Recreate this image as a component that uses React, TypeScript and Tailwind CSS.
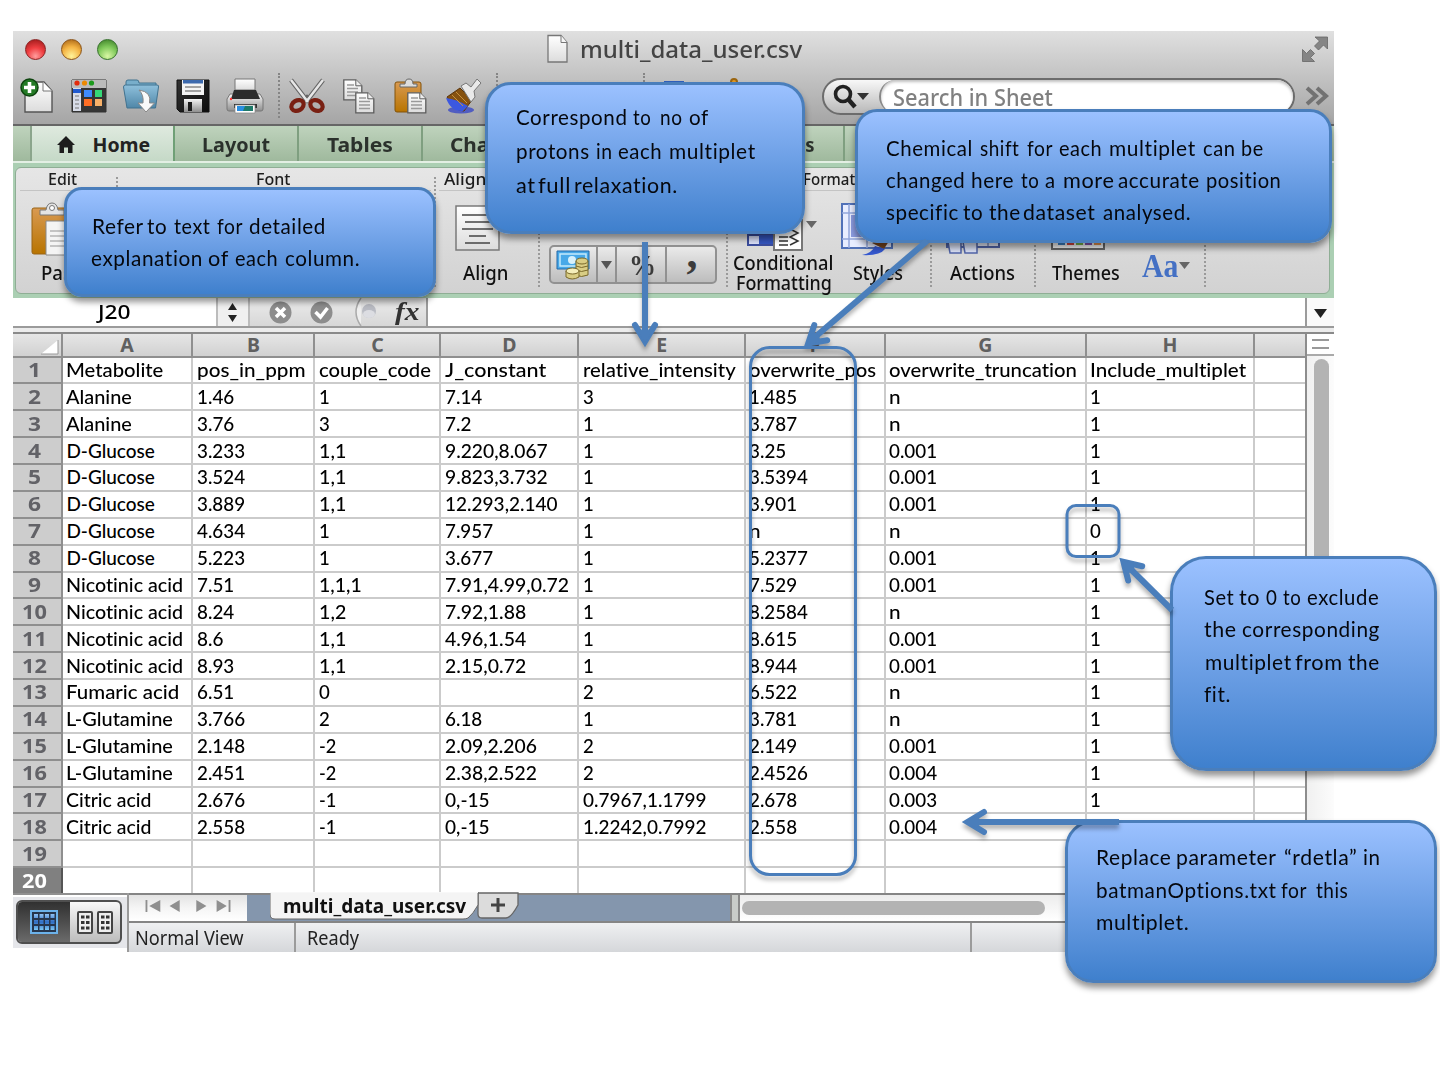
import { useLayoutEffect, useRef, useState, type ReactNode } from "react";

/** Single-line text stretched horizontally to a fixed width. */
function Fit({ w, children, className = "" }: { w: number; children: ReactNode; className?: string }) {
  const ref = useRef<HTMLSpanElement>(null);
  const [k, setK] = useState(1);
  useLayoutEffect(() => {
    if (ref.current) setK(w / ref.current.offsetWidth);
  }, [w]);
  return (
    <span className={"inline-block whitespace-nowrap text-left " + className} style={{ width: w }}>
      <span ref={ref} className="inline-block origin-left" style={{ transform: `scaleX(${k})` }}>
        {children}
      </span>
    </span>
  );
}

const ROWS: string[][] = [
  ["Metabolite", "pos_in_ppm", "couple_code", "J_constant", "relative_intensity", "overwrite_pos", "overwrite_truncation", "Include_multiplet"],
  ["Alanine", "1.46", "1", "7.14", "3", "1.485", "n", "1"],
  ["Alanine", "3.76", "3", "7.2", "1", "3.787", "n", "1"],
  ["D-Glucose", "3.233", "1,1", "9.220,8.067", "1", "3.25", "0.001", "1"],
  ["D-Glucose", "3.524", "1,1", "9.823,3.732", "1", "3.5394", "0.001", "1"],
  ["D-Glucose", "3.889", "1,1", "12.293,2.140", "1", "3.901", "0.001", "1"],
  ["D-Glucose", "4.634", "1", "7.957", "1", "n", "n", "0"],
  ["D-Glucose", "5.223", "1", "3.677", "1", "5.2377", "0.001", "1"],
  ["Nicotinic acid", "7.51", "1,1,1", "7.91,4.99,0.72", "1", "7.529", "0.001", "1"],
  ["Nicotinic acid", "8.24", "1,2", "7.92,1.88", "1", "8.2584", "n", "1"],
  ["Nicotinic acid", "8.6", "1,1", "4.96,1.54", "1", "8.615", "0.001", "1"],
  ["Nicotinic acid", "8.93", "1,1", "2.15,0.72", "1", "8.944", "0.001", "1"],
  ["Fumaric acid", "6.51", "0", "", "2", "6.522", "n", "1"],
  ["L-Glutamine", "3.766", "2", "6.18", "1", "3.781", "n", "1"],
  ["L-Glutamine", "2.148", "-2", "2.09,2.206", "2", "2.149", "0.001", "1"],
  ["L-Glutamine", "2.451", "-2", "2.38,2.522", "2", "2.4526", "0.004", "1"],
  ["Citric acid", "2.676", "-1", "0,-15", "0.7967,1.1799", "2.678", "0.003", "1"],
  ["Citric acid", "2.558", "-1", "0,-15", "1.2242,0.7992", "2.558", "0.004", "1"],
  ["", "", "", "", "", "", "", ""],
  ["", "", "", "", "", "", "", ""],
];

const LABEL_WIDTHS: Record<string, number> = {
  Metabolite: 97, Alanine: 66, "D-Glucose": 89, "Nicotinic acid": 117, "Fumaric acid": 113,
  "L-Glutamine": 107, "Citric acid": 86, pos_in_ppm: 109, couple_code: 112, J_constant: 101,
  relative_intensity: 153, overwrite_pos: 127, overwrite_truncation: 188, Include_multiplet: 156, n: 12,
};

function textWidth(s: string) {
  if (LABEL_WIDTHS[s]) return LABEL_WIDTHS[s];
  let w = 0;
  for (const c of s) w += c === "." || c === "," ? 5.3 : c === "-" ? 6.5 : 10.8;
  return w;
}

const COLS = "grid grid-cols-[50.3px_130.6px_122px_126px_138px_166.4px_140px_201px_168.6px_51.6px]";

type Word = [string, number, number];

function Callout({ box, lines, text, x }: { box: string; lines: Word[][]; text: string; x: number }) {
  return (
    <div className={"absolute border-[3px] border-[#4a7ebb] bg-linear-to-b from-[#9bc1ff] to-[#3f80cd] shadow-[0_5px_6px_rgba(0,0,0,0.42)] " + box}>
      <div className={"font-['Lato'] text-[21px] tracking-[0.6px] text-[#05070c] " + text}>
        {lines.map((line, i) => {
          let end = x;
          return (
            <div key={i} className="flex whitespace-nowrap">
              {line.map(([t, a, b], j) => {
                const gap = a - end;
                end = b;
                return (
                  <span key={j} style={{ marginLeft: gap }}>
                    <Fit w={b - a + 0.6}>{t}</Fit>
                    <span className="inline-block w-0 ml-[-0.6px]" />
                  </span>
                );
              })}
            </div>
          );
        })}
      </div>
    </div>
  );
}

function Defs() {
  return (
    <svg className="absolute size-0">
      <defs>
        <linearGradient id="paper" x1="0" y1="0" x2="0" y2="1"><stop offset="0" stopColor="#fff" /><stop offset="1" stopColor="#dcdcdc" /></linearGradient>
        <linearGradient id="folder" x1="0" y1="0" x2="0" y2="1"><stop offset="0" stopColor="#8fc0dc" /><stop offset="1" stopColor="#4f87a8" /></linearGradient>
        <linearGradient id="board" x1="0" y1="0" x2="0" y2="1"><stop offset="0" stopColor="#d99a52" /><stop offset="1" stopColor="#b87400" /></linearGradient>
        <linearGradient id="dark" x1="0" y1="0" x2="1" y2="1"><stop offset="0" stopColor="#333" /><stop offset="1" stopColor="#0c0c0c" /></linearGradient>
        <linearGradient id="steel" x1="0" y1="0" x2="0" y2="1"><stop offset="0" stopColor="#f4f4f4" /><stop offset="1" stopColor="#8f8f8f" /></linearGradient>
        <linearGradient id="cell" x1="0" y1="0" x2="0" y2="1"><stop offset="0" stopColor="#8fc3f5" /><stop offset="0.5" stopColor="#2f6dc4" /><stop offset="1" stopColor="#7cc6f3" /></linearGradient>
      </defs>
    </svg>
  );
}

function Sheet({ x, y }: { x: number; y: number }) {
  return (
    <g transform={`translate(${x} ${y})`}>
      <path d="M.8 .8h12l6 6v14H.8z" fill="url(#paper)" stroke="#5d5d5d" strokeWidth="1.3" />
      <path d="M12.8 .8v6h6" fill="#eee" stroke="#5d5d5d" />
      <path d="M4 6h7M4 9.5h11M4 13h11M4 16.5h11" stroke="#9a9a9a" strokeWidth="1.3" />
    </g>
  );
}

function Tool({ children }: { children: ReactNode }) {
  return (
    <div className="flex w-[52px] justify-center">
      <svg width="38" height="38" viewBox="0 0 38 38">{children}</svg>
    </div>
  );
}

function TitleBar() {
  return (
    <div className="flex h-[95px] flex-col border-b-2 border-[#666] bg-linear-to-b from-[#e0e0e0] to-[#a5a5a5]">
      <div className="flex h-[36px] items-center">
        <div className="flex w-[534px] gap-[15px] pl-3">
          <span className="size-[21px] rounded-full border-[1.5px] border-[#8a2020] bg-[radial-gradient(circle_at_50%_85%,#ff9d9d_0%,#f03f42_45%,#a51d1d_90%)]" />
          <span className="size-[21px] rounded-full border-[1.5px] border-[#8b5316] bg-[radial-gradient(circle_at_50%_85%,#fff39a_0%,#f4b343_50%,#a86415_95%)]" />
          <span className="size-[21px] rounded-full border-[1.5px] border-[#34702a] bg-[radial-gradient(circle_at_50%_85%,#d9f7a4_0%,#80c95b_50%,#3e8129_95%)]" />
        </div>
        <svg width="22" height="30" viewBox="0 0 22 30"><path d="M1 1.5h13l6 7v19.500H1z" fill="url(#paper)" stroke="#777" strokeWidth="1.3" /><path d="M14 1.500v7h6" fill="#f5f5f5" stroke="#777" /></svg>
        <Fit w={222} className="ml-[11px] text-[23.500px] leading-[30px] font-medium text-[#444]">multi_data_user.csv</Fit>
        <svg className="ml-auto mr-[5px]" width="28" height="28" viewBox="0 0 28 28" fill="#858585" stroke="#666" strokeWidth=".8">
          <path d="M14 2h12.500v12l-4-4-5 5-4-4 5-5z" /><path d="M1.500 27V15l4 4 4-4 4 4-4 4 4 4z" transform="translate(0 -.5)" />
        </svg>
      </div>
      <div className="flex h-[57px] items-center">
        <div className="-ml-[2px] flex">
          <Tool>
            <path d="M7 5h19l8 9v21H7z" fill="url(#paper)" stroke="#555" strokeWidth="1.4" /><path d="M25 5v9h9" fill="#fff" stroke="#777" />
            <circle cx="11.500" cy="10.500" r="8.500" fill="#237a25" stroke="#0d430e" strokeWidth="1.5" /><path d="M11.500 5v11M6 10.500h11" stroke="#fff" strokeWidth="3.6" />
          </Tool>
          <Tool>
            <path d="M2 3h34v32H2z" fill="#353535" stroke="#333" /><path d="M2 3h34v8H2z" fill="#bbb" /><path d="M3 11h8v23H3z" fill="#d7dce8" /><path d="M3 12h8v4H3z" fill="#205ad0" />
            <circle cx="7" cy="6" r="2.600" fill="#e22b0c" /><circle cx="14.500" cy="6" r="2.600" fill="#ed8a00" /><circle cx="21.500" cy="6" r="2.600" fill="#1c991c" />
            <path d="M5 19h4M5 23h4M5 27h4M5 31h4" stroke="#777" /><path d="M14 13h8v7h-8z" fill="#3f8bff" /><path d="M25 13h7v7h-7z" fill="#35d878" /><path d="M14 22h8v7h-8z" fill="#ff6e25" /><path d="M25 22h7v7h-7z" fill="#f7b069" />
          </Tool>
          <Tool>
            <path d="M4 12V5q0-2 2-2h9q2 0 2 3h17v10z" fill="#78aecb" stroke="#41728f" /><path d="M1.500 10q0-2 2-2H35q2 0 1.500 2l-3 21H5z" fill="url(#folder)" stroke="#41728f" />
            <path d="M17 13q13 2 10.500 13h5L24 35l-8-9h5q1-8-4-13z" fill="#fafafa" stroke="#888" />
          </Tool>
          <Tool>
            <path d="M3 3h32v32H6l-3-3z" fill="url(#dark)" stroke="#111" /><path d="M8 3h22v15H8z" fill="#f4f4f4" /><path d="M9 3h20v3.500H9z" fill="#3c69ad" /><path d="M11 10h16M11 14h16" stroke="#888" strokeWidth="1.500" />
            <path d="M10 22h18v13H10z" fill="url(#steel)" /><path d="M14 25h4v9h-4z" fill="#1c1c1c" />
          </Tool>
          <Tool>
            <path d="M9 13V2h20v11z" fill="url(#paper)" stroke="#777" /><path d="M4 17h30l3 5v10q0 2-2 2H3q-2 0-2-2V22z" fill="url(#steel)" stroke="#777" /><path d="M8 13h22l4 9H5z" fill="#2c2c2c" /><path d="M8 27h23v4H8z" fill="#333" />
            <path d="M9 28h20v8H9z" fill="#fff" stroke="#888" strokeWidth=".7" /><path d="M11 29h16v5H11z" fill="#2a8ee0" /><path d="M19 29h8v5h-10z" fill="#1d7a69" /><circle cx="5" cy="22" r="1.200" fill="#f33" />
          </Tool>
        </div>
        <div className="ml-[7px] h-[45px] border-l-2 border-dotted border-[#858585]" />
        <div className="ml-[1px] flex">
          <Tool>
            <path d="M3 3l17 22M35 3L18 25" stroke="#666" strokeWidth="4.500" /><path d="M3 3l17 22M35 3L18 25" stroke="#e7e7e7" strokeWidth="2.500" />
            <ellipse cx="9.500" cy="28.500" rx="6.500" ry="5" fill="none" stroke="#792013" strokeWidth="4.200" transform="rotate(-30 9.500 28.500)" /><ellipse cx="28.500" cy="28.500" rx="6.500" ry="5" fill="none" stroke="#792013" strokeWidth="4.200" transform="rotate(30 28.500 28.500)" /><circle cx="19" cy="19" r="1.500" fill="#666" />
          </Tool>
          <Tool><Sheet x={3} y={2} /><Sheet x={15} y={15} /></Tool>
          <Tool><rect x="3" y="5" width="26" height="30" rx="2" fill="url(#board)" stroke="#82520b" /><path d="M8 10V7h5q0-5 4-5t4 5h4v3z" fill="#ddd" stroke="#666" /><Sheet x={15} y={15} /></Tool>
          <Tool>
            <ellipse cx="17" cy="33" rx="13" ry="3.500" fill="#3949c6" opacity=".8" /><path d="M3 20l13-9 12 12-8 11q-10 0-17-14z" fill="#85510f" stroke="#5a350c" /><path d="M2 21q10 1 22 8l-5 5Q7 35 2 21z" fill="#3c58e0" />
            <path d="M8 18l11 11M12 15l11 11" stroke="#c8913d" /><path d="M17 9l5-3 5 4 6-8 4 4-7 8 1 6-4 5z" fill="#e9e9e9" stroke="#777" />
          </Tool>
        </div>
        <div className="ml-[7px] h-[45px] border-l-2 border-dotted border-[#858585]" />
        <div className="ml-[145px] h-[45px] border-l-2 border-dotted border-[#858585]" />
        <div className="ml-[19px] h-[30px] w-5 border-t-2 border-[#2f5fbb]" />
        <div className="ml-[46px] size-[8px] -translate-y-[14px] rounded-full border-2 border-[#9a6510] bg-[#e69a20]" />
        <div className="ml-[84px] mt-[2px] flex h-[37px] w-[473px] items-center rounded-full border-2 border-[#6c6c6c] bg-linear-to-b from-[#f8f8f8] to-[#b9b9b9]">
          <svg className="ml-[8px]" width="39" height="28" viewBox="0 0 39 28"><circle cx="11" cy="11" r="7.500" fill="none" stroke="#222" strokeWidth="3.600" /><path d="M16 16l7 8" stroke="#222" strokeWidth="4.500" /><path d="M25 10h12l-6 7z" fill="#333" /></svg>
          <div className="ml-[8px] flex h-full flex-1 items-center rounded-full border-l-2 border-[#888] bg-white pl-3 shadow-[inset_0_2px_3px_rgba(0,0,0,0.25)]">
            <Fit w={160} className="text-[23px] leading-[30px] font-medium text-[#808080]">Search in Sheet</Fit>
          </div>
        </div>
        <svg className="ml-[10px]" width="26" height="20" viewBox="0 0 26 20" fill="none" stroke="#727272" strokeWidth="4"><path d="M2 2l9 8-9 8M12 2l9 8-9 8" /></svg>
      </div>
    </div>
  );
}

function Tab({ cls, label, w }: { cls: string; label: string; w: number }) {
  return (
    <div className={"flex items-center justify-center border-r-2 border-[#7f9f80] pt-[2px] " + cls}>
      {label && <Fit w={w} className="text-[19.500px] font-bold text-[#2b312c]">{label}</Fit>}
    </div>
  );
}

function Tabs() {
  return (
    <div className="flex h-[35px] bg-linear-to-b from-[#bfd3bd] to-[#9fb99d]">
      <div className="w-[19px] border-r-2 border-[#8ba58c]" />
      <div className="flex w-[143px] items-center border-r-2 border-[#6fa076] bg-linear-to-b from-[#dfeadf] to-[#c5d9c7] pt-[2px] pl-[25px] text-[#222]">
        <svg width="18" height="17" viewBox="0 0 18 17" fill="#1d1d1d"><path d="M9 0l9 9h-2.500v8H11v-5.500H7V17H2.500V9H0z" /></svg>
        <Fit w={58} className="ml-[18px] text-[19.500px] font-bold">Home</Fit>
      </div>
      <Tab cls="w-[124px]" label="Layout" w={68} />
      <Tab cls="w-[124px]" label="Tables" w={66} />
      <Tab cls="w-[124px]" label="Charts" w={68} />
      <Tab cls="w-[155px]" label="" w={90} />
      <Tab cls="w-[143px]" label="Formulas" w={86} />
      <div className="flex-1" />
    </div>
  );
}

function Group({ cls, title, tw, head = "", children }: { cls: string; title: string; tw: number; head?: string; children?: ReactNode }) {
  return (
    <div className={"relative flex flex-col " + cls}>
      <div className={"mx-[4px] flex h-[23px] items-center justify-center border-b border-[#c4c4c4] " + head}>
        {title && <Fit w={tw} className="text-[16.500px] font-medium leading-[22px] text-[#1d1d1d]">{title}</Fit>}
      </div>
      <div className="flex flex-1">{children}</div>
      <div className="absolute top-[9px] right-[-1px] h-[110px] border-l-2 border-dotted border-[#9a9a9a]" />
    </div>
  );
}

const LBL = "text-[19px] font-medium leading-[20px] text-[#111]";

function Ribbon() {
  return (
    <div className="h-[137px] border-t-2 border-[#e3efe4] bg-[#abcfb3] px-[2px] pt-[4px] pb-[4px]">
      <div className="mr-[2px] flex h-[127px] rounded-[6px] border border-[#8fae95] bg-linear-to-b from-[#e6e6e6] to-[#d2d2d2]">
        <Group cls="w-[101px]" title="Edit" tw={29} head="pr-[7px]">
          <div className="flex flex-col pl-[15px]">
            <svg className="mt-[10px]" width="48" height="56" viewBox="0 0 48 56"><rect x="1" y="7" width="40" height="46" rx="2" fill="url(#board)" stroke="#9a6415" /><path d="M9 14V9h6Q16 2 21 2t6 7h6v5z" fill="#e4e4e4" stroke="#777" /><circle cx="21" cy="7" r="2.500" fill="#fff" stroke="#777" /><path d="M15 20h30v34H15z" fill="#f4f4f4" stroke="#888" /><path d="M19 30h20M19 35h20M19 40h20M19 45h20" stroke="#b4b4b4" strokeWidth="1.500" /></svg>
            <Fit w={49} className={"ml-[10px] mt-[6px] " + LBL}>Paste</Fit>
          </div>
        </Group>
        <Group cls="w-[318px]" title="Font" tw={34} head="pr-[6px]" />
        <Group cls="w-[104px]" title="Alignment" tw={86}>
          <div className="flex flex-col pl-[20px]">
            <svg className="mt-[14px]" width="45" height="46" viewBox="0 0 45 46"><path d="M1 1h43v44H1z" fill="url(#paper)" stroke="#7a7a7a" strokeWidth="1.500" /><path d="M7 10h31M10 17h25M7 24h31M14 31h17M10 38h25" stroke="#444" strokeWidth="1.600" /></svg>
            <Fit w={45} className={"ml-[8px] mt-[12px] " + LBL}>Align</Fit>
          </div>
        </Group>
        <Group cls="w-[188px]" title="" tw={66}>
          <div className="mt-[54px] ml-[10px] flex h-[39px] w-[168px] items-center rounded-[5px] border-2 border-[#919191] bg-linear-to-b from-[#eaeaea] to-[#bdbdbd]">
            <div className="flex h-full w-[47px] items-center justify-center border-r-2 border-[#919191]">
              <svg width="34" height="32" viewBox="0 0 34 32"><path d="M1 2h32v18H1z" fill="#48a9e8" stroke="#2269a8" /><path d="M4 5h26v12H4z" fill="none" stroke="#c4eafc" strokeWidth="1.500" /><circle cx="16" cy="11" r="4" fill="#d7f1fc" /><g fill="#d9cd84" stroke="#79682a"><path d="M20 12v14q5 3 12 0V12z" /><ellipse cx="26" cy="12" rx="6" ry="3" /><path d="M20 17q5 3 12 0M20 21q5 3 12 0" fill="none" /><path d="M10 22v6q6 4 13 0v-6z" /><ellipse cx="16.500" cy="22" rx="6.500" ry="3" fill="#f4eebb" /></g></svg>
            </div>
            <div className="flex h-full w-[19px] items-center justify-center border-r-2 border-[#919191]"><svg width="11" height="8"><path d="M0 0h11l-5.500 8z" fill="#555" /></svg></div>
            <div className="flex h-full w-[50px] items-center justify-center border-r-2 border-[#919191] pl-1 font-['Liberation_Serif'] text-[30px] font-bold text-[#3c3c3c]"><Fit w={27}>%</Fit></div>
            <div className="flex h-full flex-1 items-center justify-center pb-[22px] pl-[3px] font-['Liberation_Serif'] text-[44px] font-bold text-[#3c3c3c]">,</div>
          </div>
        </Group>
        <Group cls="w-[204px]" title="Format" tw={52}>
          <div className="flex w-[114px] flex-col pl-[6px]">
            <div className="flex h-[62px] pt-[13px] pl-[14px]">
              <svg width="57" height="47" viewBox="0 0 57 47"><path d="M1 1h45v40H1z" fill="#e5eaff" stroke="#3b4d9d" strokeWidth="2" /><path d="M1 31h28v10H1z" fill="#d8def8" stroke="#3b4d9d" strokeWidth="2" /><path d="M12 31h14v9H12z" fill="#3454bd" /><path d="M27 16h28v30H27z" fill="#fff" stroke="#777" strokeWidth="2" /><path d="M32 33h9M32 37h9M32 41h9" stroke="#333" strokeWidth="1.500" /><path d="M43 25l8 4-8 4 8 4-8 4" fill="none" stroke="#333" strokeWidth="1.500" /></svg>
              <svg className="mt-[17px] ml-[2px]" width="11" height="8"><path d="M0 0h11l-5.500 7z" fill="#666" /></svg>
            </div>
            <Fit w={100} className={LBL}>Conditional</Fit>
            <Fit w={96} className={"ml-[3px] " + LBL}>Formatting</Fit>
          </div>
          <div className="flex flex-col">
            <svg className="mt-[11px]" width="54" height="54" viewBox="0 0 54 54"><path d="M1 2h50v44H1z" fill="#e8edff" stroke="#5272b8" strokeWidth="2" /><path d="M8 2v44M1 11h50M1 37h50M26 2v44" stroke="#92a6db" strokeWidth="1.500" /><path d="M10 13h30v22H10z" fill="#8b9bdf" /><path d="M31 41l10-8 7 6-5 8z" fill="#7a471d" /><path d="M21 53q10-2 13-9l10 3q-5 7-23 6z" fill="#3558cf" /></svg>
            <Fit w={50} className={"ml-[12px] mt-[7px] " + LBL}>Styles</Fit>
          </div>
        </Group>
        <Group cls="w-[104px]" title="" tw={38}>
          <div className="flex flex-col pl-[15px]">
            <svg className="mt-[14px]" width="55" height="50" viewBox="0 0 55 50"><path d="M1 20h52v22H1z" fill="#e9efff" stroke="#5165a9" strokeWidth="2" /><path d="M2 37h13v11H4zM17 37h14v11H19z" fill="#dce3f8" stroke="#5165a9" strokeWidth="1.500" /><path d="M42 20v22" stroke="#5165a9" /></svg>
            <Fit w={65} className={"ml-[4px] mt-[8px] " + LBL}>Actions</Fit>
          </div>
        </Group>
        <Group cls="w-[170px]" title="" tw={56}>
          <div className="flex w-[105px] flex-col pl-[16px]">
            <svg className="mt-[14px]" width="55" height="46" viewBox="0 0 55 46"><path d="M1 1h52v43H1z" fill="#f8f8f8" stroke="#666" strokeWidth="2" /><path d="M7 36h7v4H7z" fill="#3f83c5" /><path d="M16 36h7v4h-7z" fill="#d9453d" /><path d="M25 36h7v4h-7z" fill="#78b84b" /><path d="M34 36h7v4h-7z" fill="#8554ad" /><path d="M43 36h7v4h-7z" fill="#e8944d" /></svg>
            <Fit w={68} className={"ml-[1px] mt-[12px] " + LBL}>Themes</Fit>
          </div>
          <div className="mt-[58px] ml-[2px] flex h-[34px] items-center">
            <Fit w={36} className="font-['Liberation_Serif'] text-[33px] leading-8 font-bold text-[#4470c4]">Aa</Fit>
            <svg className="ml-[1px]" width="12" height="8"><path d="M0 0h11l-5.500 7z" fill="#666" /></svg>
          </div>
        </Group>
      </div>
    </div>
  );
}

function FormulaBar() {
  return (
    <>
      <div className="flex h-[30px] border-b-2 border-[#9b9b9b] bg-white">
        <div className="flex w-[205px] items-center justify-center border-r-2 border-[#bcbcbc]"><Fit w={33} className="text-[20px] leading-[26px] font-medium text-black">J20</Fit></div>
        <div className="flex w-[32px] items-center justify-center border-r-2 border-[#bcbcbc] bg-[#f0f0f0]"><svg width="9" height="19"><path d="M0 7l4.500-7L9 7zM0 12l4.500 7L9 12z" fill="#222" /></svg></div>
        <div className="flex w-[178px] items-center border-r-2 border-[#9b9b9b] bg-linear-to-b from-[#ececec] to-[#d7d7d7] pl-[19px]">
          <svg width="23" height="23" viewBox="0 0 23 23"><circle cx="11.500" cy="11.500" r="11" fill="#8d8d8d" /><path d="M7 7l9 9M16 7l-9 9" stroke="#fff" strokeWidth="3.500" /></svg>
          <svg className="ml-[18px]" width="23" height="23" viewBox="0 0 23 23"><circle cx="11.500" cy="11.500" r="11" fill="#8d8d8d" /><path d="M5.500 11l5 5 7-9" stroke="#fff" strokeWidth="3.500" fill="none" /></svg>
          <svg className="ml-[18px]" width="26" height="28" viewBox="0 0 26 28"><path d="M10 0Q0 14 10 28" fill="#eee" stroke="#aaa" strokeWidth="1.500" /><circle cx="18" cy="13" r="7" fill="#b9bbc3" /><ellipse cx="18" cy="16" rx="6" ry="4" fill="#dcdde2" /></svg>
          <Fit w={25} className="ml-[18px] font-['Liberation_Serif'] text-[26px] leading-7 font-bold text-[#333] italic">fx</Fit>
        </div>
        <div className="flex-1" />
        <div className="flex w-[29px] items-center justify-center border-l-2 border-[#9b9b9b] bg-[#fafafa] pt-[3px]"><svg width="13" height="9"><path d="M0 0h13L6.500 9z" fill="#222" /></svg></div>
      </div>
      <div className="h-[6px] border-b-2 border-[#8a8a8a] bg-[#ececec]" />
    </>
  );
}

function Grid() {
  return (
    <div className="flex h-[559px]">
      <div className="w-[1294.500px] overflow-hidden border-r-2 border-[#8d8d8d]">
        <div className={COLS + " h-[23.500px] bg-linear-to-b from-[#e6e6e6] to-[#cfcfcf]"}>
          <div className="flex items-end justify-end border-r-2 border-b-2 border-[#8f8f8f] pr-[2px] pb-[1px]"><svg width="18" height="15"><path d="M17 0v14H0z" fill="#fff" /><path d="M17 0v14H0" fill="none" stroke="#999" /></svg></div>
          {["A", "B", "C", "D", "E", "F", "G", "H", ""].map((c, i) => (
            <div key={i} className="flex items-center justify-center border-r-2 border-b-2 border-[#8f8f8f] pt-px text-[19.500px] leading-5 font-bold text-[#606060]">{c}</div>
          ))}
        </div>
        {ROWS.map((r, i) => (
          <div key={i} className={COLS + " h-[26.890px]"}>
            <div className={"flex items-center justify-center border-r-2 border-b-2 pr-[4px] font-bold " + (i === 19 ? "border-[#555] bg-[#808080] text-white" : "border-[#8f8f8f] bg-[#cdcdcd] text-[#626267]")}>
              <Fit w={i > 8 ? 25 : 12.5} className="text-[20px] leading-6">{i + 1}</Fit>
            </div>
            {[...r, ""].map((c, j) => (
              <div key={j} className="flex items-center border-r-2 border-b-2 border-[#cbcbcb] pl-[3.600px] font-['Lato'] text-[19px] leading-6 font-medium text-black [font-variant-ligatures:none]">
                {c && <Fit w={textWidth(c)}>{c}</Fit>}
              </div>
            ))}
          </div>
        ))}
      </div>
      <div className="flex flex-1 flex-col bg-linear-to-r from-[#f0f0f0] to-[#fcfcfc]">
        <div className="flex h-[22px] flex-col items-center justify-center gap-[6px] border-b-2 border-[#aaa] bg-white"><div className="h-[2px] w-[17px] bg-[#999]" /><div className="h-[2px] w-[17px] bg-[#999]" /></div>
        <div className="ml-[7px] mt-[3px] h-[230px] w-[15px] rounded-full bg-[#b3b3b3]" />
      </div>
    </div>
  );
}

function Bottom() {
  return (
    <div className="flex h-[59px]">
      <div className="w-[114px] border-t-2 border-[#909090]">
        <div className="mt-[2px] h-[51px] bg-[#e5e6ea] px-[3px] pt-[3px]">
          <div className="flex h-[44px] w-[106px] overflow-hidden rounded-[6px] border-2 border-[#4f4f4f] bg-linear-to-b from-[#f8f8f8] to-[#bcbcbc]">
            <div className="flex w-[52px] items-center justify-center bg-linear-to-b from-[#313131] to-[#6b6b6b]">
              <svg width="28" height="24" viewBox="0 0 28 24"><path d="M1 1h26v22H1z" fill="#26364d" stroke="#6cb2ea" strokeWidth="2" /><path d="M4 4h4v4H4zM9.500 4h4v4h-4zM15 4h4v4h-4zM20.500 4h4v4h-4zM4 10h4v4H4zM9.500 10h4v4h-4zM15 10h4v4h-4zM20.500 10h4v4h-4zM4 16h4v4H4zM9.500 16h4v4h-4zM15 16h4v4h-4zM20.500 16h4v4h-4z" fill="url(#cell)" /></svg>
            </div>
            <div className="flex flex-1 items-center justify-center gap-[4px]">
              {[0, 1].map((k) => (
                <svg key={k} width="16" height="23" viewBox="0 0 16 23"><rect x="1" y="1" width="14" height="21" rx="1" fill="#eee" stroke="#444" strokeWidth="2" /><path d="M4 6h3.500M9 6h3.500M4 11.500h3.500M9 11.500h3.500M4 17h3.500M9 17h3.500" stroke="#333" strokeWidth="3" /></svg>
              ))}
            </div>
          </div>
        </div>
      </div>
      <div className="flex flex-1 flex-col border-l-2 border-[#9a9a9a]">
        <div className="flex h-[30px] border-t-2 border-b-2 border-[#858585] bg-[#8496ad]">
          <div className="flex w-[118px] items-center justify-center bg-linear-to-b from-[#e3e3e3] via-[#f5f5f5] to-white pb-[5px]">
            <svg width="94" height="12" viewBox="0 0 94 13" fill="#8f8f8f"><path d="M1 0h2v13H1zM17 0v13L5 6.500zM38 0v13L27 6.500zM56 0v13l11-6.500zM78 0v13l11-6.500zM91 0h2v13h-2z" /></svg>
          </div>
          <div className="relative ml-[23px] w-[249px]">
            <svg className="absolute -top-[3px] left-0" width="251" height="29" viewBox="0 0 251 29"><path d="M208 1h40v12q-7 13-12 13h-24q-4 0-4-4z" fill="#dcdcdc" stroke="#666" strokeWidth="1.300" /><path d="M0 0h208v13q-5 9-10 13-2 1-5 1H5q-5 0-5-5z" fill="#f4f4f4" stroke="#666" /><path d="M0 0h208" stroke="#f8f8f8" strokeWidth="2" /><path d="M221 13h14M228 6v14" stroke="#444" strokeWidth="3" /></svg>
            <Fit w={183} className="relative ml-[13px] text-[19.500px] leading-[22px] font-bold text-[#111]">multi_data_user.csv</Fit>
          </div>
          <div className="ml-auto w-[10px] border-x-2 border-[#8a8a8a] bg-[#c9ccc9]" />
          <div className="flex w-[594px] items-center bg-linear-to-b from-[#ececec] to-[#fff] pl-[2px]"><div className="h-[14px] w-[303px] rounded-full bg-[#b3b3b3]" /></div>
        </div>
        <div className="flex h-[29px] items-center bg-linear-to-b from-[#eff0f2] to-[#d5d7da] text-[19.500px] leading-6 text-[#222]">
          <div className="flex h-full w-[167px] items-center border-r-2 border-[#9b9b9b] pl-[6px]"><Fit w={109}>Normal View</Fit></div>
          <div className="flex h-full w-[676px] items-center border-r-2 border-[#9b9b9b] pl-[11px]"><Fit w={52}>Ready</Fit></div>
        </div>
      </div>
    </div>
  );
}

/** Barbed arrowhead whose tip is at (x, y); angle 0 points down. */
function Head({ x, y, angle }: { x: number; y: number; angle: number }) {
  return (
    <g transform={`translate(${x} ${y}) rotate(${angle})`}>
      <path d="M-10 -22L0 -5.500L10 -22" strokeLinecap="round" />
      <path d="M-6 -14L-2 -19H2L6 -14L0 -4z" fill="#4a7ebb" stroke="none" />
    </g>
  );
}

function Arrows() {
  return (
    <svg className="pointer-events-none absolute top-0 left-0 drop-shadow-[0_4px_2px_rgba(0,0,0,0.3)]" width="1440" height="1080" fill="none" stroke="#4a7ebb" strokeWidth="6">
      <path d="M645 242V338" /><Head x={645} y={347} angle={0} />
      <path d="M927 241L811 340.500" /><Head x={804} y={347} angle={49.5} />
      <path d="M1172 610L1126 564.500" /><Head x={1119.5} y={558} angle={134.5} />
      <path d="M1119 822H972" /><Head x={962} y={822} angle={90} />
      <g strokeWidth="3">
        <rect x="750.500" y="347.500" width="105" height="527" rx="19" />
        <rect x="1067" y="505.500" width="52" height="51" rx="9" />
      </g>
    </svg>
  );
}

export default function App() {
  return (
    <div className="relative h-[1080px] w-[1440px] overflow-hidden bg-white font-['Noto_Sans',sans-serif]">
      <Defs />
      <div className="ml-[12.500px] flex w-[1321px] flex-col pt-[31px]">
        <TitleBar />
        <Tabs />
        <Ribbon />
        <FormulaBar />
        <Grid />
        <Bottom />
      </div>
      <Callout box="left-[64px] top-[187px] h-[110px] w-[372px] rounded-[18px]" x={67} text="pt-[20px] leading-[32px]" lines={[
        [["Refer", 92, 143], ["to", 147, 167], ["text", 174, 210], ["for", 217, 242], ["detailed", 249, 325]],
        [["explanation", 91, 202], ["of", 208, 228], ["each", 235, 278], ["column.", 285, 360]],
      ]} />
      <Callout box="left-[485px] top-[82px] h-[152px] w-[320px] rounded-[26px]" x={488} text="pt-[15px] leading-[34px]" lines={[
        [["Correspond", 516, 627], ["to", 633, 651], ["no", 660, 682], ["of", 689, 708]],
        [["protons", 516, 589], ["in", 596, 612], ["each", 618, 662], ["multiplet", 669, 755]],
        [["at", 516, 535], ["full", 538, 570], ["relaxation.", 574, 677]],
      ]} />
      <Callout box="left-[855px] top-[109px] h-[134px] w-[477px] rounded-[22px]" x={858} text="pt-[20px] leading-[32px]" lines={[
        [["Chemical", 886, 972], ["shift", 980, 1019], ["for", 1027, 1052], ["each", 1059, 1102], ["multiplet", 1109, 1195], ["can", 1203, 1235], ["be", 1241, 1263]],
        [["changed", 886, 965], ["here", 971, 1014], ["to", 1021, 1039], ["a", 1045, 1055], ["more", 1063, 1114], ["accurate", 1118, 1199], ["position", 1206, 1281]],
        [["specific", 886, 958], ["to", 963, 983], ["the", 989, 1020], ["dataset", 1023, 1095], ["analysed.", 1103, 1190]],
      ]} />
      <Callout box="left-[1170px] top-[556px] h-[215px] w-[267px] rounded-[36px]" x={1173} text="pt-[22px] leading-[32.400px]" lines={[
        [["Set", 1204, 1234], ["to", 1239, 1260], ["0", 1266, 1277], ["to", 1283, 1301], ["exclude", 1307, 1379]],
        [["the", 1204, 1236], ["corresponding", 1242, 1379]],
        [["multiplet", 1205, 1291], ["from", 1295, 1342], ["the", 1348, 1379]],
        [["fit.", 1204, 1230]],
      ]} />
      <Callout box="left-[1065px] top-[820px] h-[163px] w-[372px] rounded-[28px]" x={1068} text="pt-[18px] leading-[32.500px]" lines={[
        [["Replace", 1096, 1171], ["parameter", 1176, 1276], ["“rdetla”", 1284, 1357], ["in", 1363, 1380]],
        [["batmanOptions.txt", 1096, 1276], ["for", 1281, 1306], ["this", 1316, 1348]],
        [["multiplet.", 1096, 1189]],
      ]} />
      <Arrows />
    </div>
  );
}
